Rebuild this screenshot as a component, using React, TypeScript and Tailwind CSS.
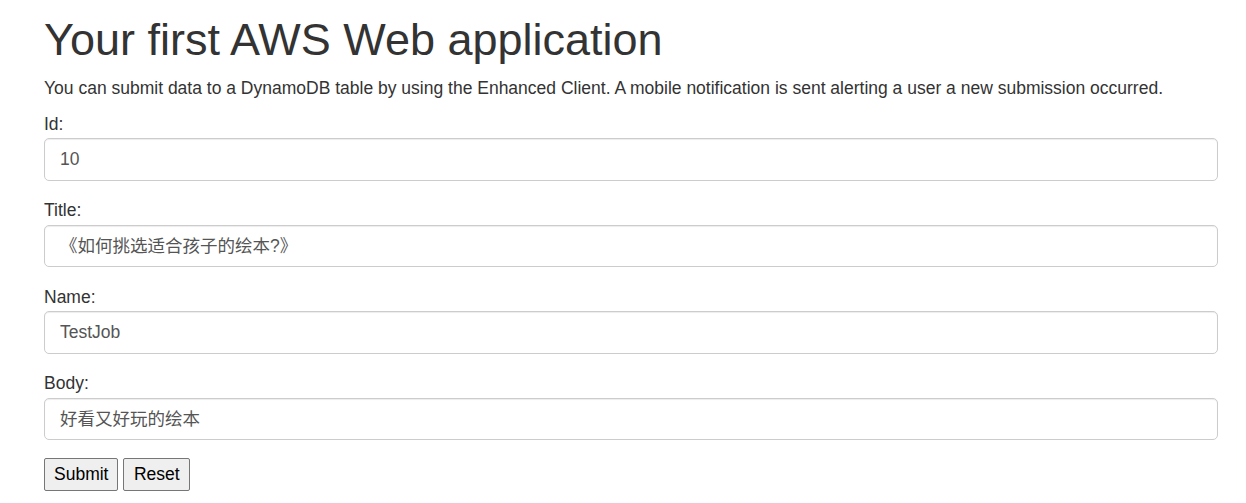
export default function App() {
  const fields = [
    { label: "Id:", value: "10" },
    { label: "Title:", value: "《如何挑选适合孩子的绘本?》" },
    { label: "Name:", value: "TestJob" },
    { label: "Body:", value: "好看又好玩的绘本" },
  ];
  return (
    <div
      className="w-[1246px] h-[503px] bg-white pl-[44px] pr-[28px] pt-[14.5px] text-[#333]"
      style={{ fontFamily: '"Liberation Sans", Arial, "Noto Sans CJK SC", sans-serif' }}
    >
      <h1 className="text-[45px] leading-[49.5px] font-normal">Your first AWS Web application</h1>
      <p className="mt-[11.5px] text-[17.5px] leading-[25px]">
        You can submit data to a DynamoDB table by using the Enhanced Client. A mobile notification is sent alerting a user a new submission occurred.
      </p>
      <div className="mt-[11px] flex flex-col gap-[17.5px]">
        {fields.map((f) => (
          <div key={f.label} className="flex flex-col">
            <label className="text-[17.5px] leading-[25px] mb-[1.5px]">{f.label}</label>
            <div className="h-[42.5px] border border-[#ccc] rounded-[5px] px-[15px] flex items-center text-[17.5px] text-[#555] shadow-[inset_0_1px_1px_rgba(0,0,0,0.075)]">
              {f.value}
            </div>
          </div>
        ))}
      </div>
      <div className="mt-[18px] flex gap-[5px]">
        <button className="h-[32.5px] px-[9px] bg-[#efefef] border border-[#767676] rounded-[2px] text-[17.5px] text-black">Submit</button>
        <button className="h-[32.5px] px-[9.5px] bg-[#efefef] border border-[#767676] rounded-[2px] text-[17.5px] text-black">Reset</button>
      </div>
    </div>
  );
}
